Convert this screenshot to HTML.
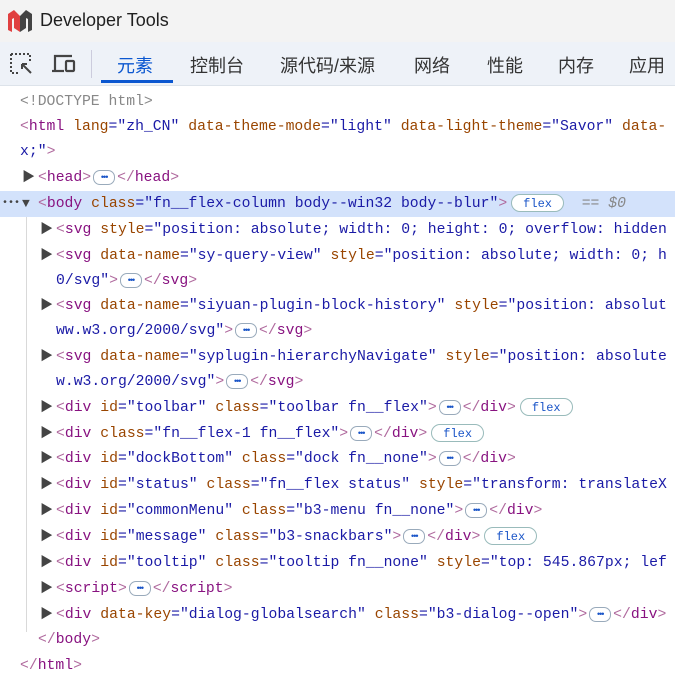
<!DOCTYPE html>
<html><head><meta charset="utf-8"><style>
body{margin:0;width:675px;height:682px;overflow:hidden;background:#fff;font-family:"Liberation Sans","Noto Sans CJK SC",sans-serif;position:relative}
.title{position:absolute;left:0;top:0;width:675px;height:42px;background:#f3f3f3}
.title span{position:absolute;left:40px;top:10px;font-size:18px;color:#1f1f1f}
.tabs{position:absolute;left:0;top:42px;width:675px;height:43px;background:#eef2f8;border-bottom:1px solid #dde3ea}
.tab{position:absolute;top:10px;font-size:18px;color:#333}
.sel{color:#0b57d0}
.ul{position:absolute;left:101px;top:80px;width:72px;height:3px;background:#0b57d0}
.l{position:absolute;left:0;right:0;height:26px;line-height:26px;font-family:"Liberation Mono","Noto Sans CJK SC",monospace;font-size:14.75px;white-space:pre;color:#1a1aa6;overflow:hidden}
.i1{left:20px;padding-left:18px}.i2{left:38px;padding-left:18px}
.t{color:#881280}.b{color:#b06a9e}.a{color:#994500}.v{color:#1a1aa6}.g{color:#888}
.tri{color:#444;font-size:13px;position:absolute;left:2px}
.e{display:inline-block;width:20px;height:13px;border:1px solid #9ab;border-radius:7px;vertical-align:middle;font-size:9px;line-height:12px;text-align:center;color:#1a55c8;font-family:"Liberation Sans",sans-serif;letter-spacing:-1px;margin:0 2px}
.f{display:inline-block;height:18px;line-height:18px;padding:0 11px;border:1px solid #9bb;border-radius:10px;font-size:12px;color:#1a55c8;vertical-align:middle;margin-left:4px;background:#fff;box-sizing:border-box}
.hl{background:#d3e2fb}
.guide{position:absolute;left:26px;top:216px;width:1px;height:416px;background:#d9d9d9}
</style></head><body>
<div class="title">
<svg style="position:absolute;left:8px;top:10px" width="24" height="22" viewBox="0 0 24 22"><path d="M0 4L6 0L12 6V22L6 18V8L4 9V22L0 20Z" fill="#e04040"/><path d="M12 6L18 0L24 4V20L20 22V9L18 8V18L12 22Z" fill="#444"/></svg>
<span>Developer Tools</span></div>
<div class="tabs">
<svg style="position:absolute;left:10px;top:11px" width="24" height="22" viewBox="0 0 24 22" fill="none" stroke="#444" stroke-width="2" stroke-dasharray="2 2"><path d="M1 1H20V8M1 1V20H8"/><path d="M12 11L21 20M12 11H17M12 11V16" stroke-dasharray="none"/></svg>
<svg style="position:absolute;left:52px;top:12px" width="24" height="20" viewBox="0 0 24 20" fill="none" stroke="#444" stroke-width="2.2"><path d="M3 16V2H20"/><path d="M0 17H12"/><rect x="14" y="7" width="8" height="10" rx="1"/></svg>
<div style="position:absolute;left:91px;top:8px;width:1px;height:28px;background:#ccd"></div>
<span class="tab sel" style="left:117px">元素</span>
<span class="tab" style="left:190px">控制台</span>
<span class="tab" style="left:280px">源代码/来源</span>
<span class="tab" style="left:414px">网络</span>
<span class="tab" style="left:487px">性能</span>
<span class="tab" style="left:558px">内存</span>
<span class="tab" style="left:629px">应用</span>
</div>
<div class="ul"></div>
<div class="guide"></div>
<div class="l g" style="top:89px;left:20px">&lt;!DOCTYPE html&gt;</div>
<div class="l" style="top:114px;left:20px"><span class="b">&lt;</span><span class="t">html</span> <span class="a">lang</span>=<span class="v">"zh_CN"</span> <span class="a">data-theme-mode</span>=<span class="v">"light"</span> <span class="a">data-light-theme</span>=<span class="v">"Savor"</span> <span class="a">data-</span></div>
<div class="l" style="top:139px;left:20px">x;"<span class="b">&gt;</span></div>
<div class="l i1" style="top:165px"><span class="tri">▶</span><span class="b">&lt;</span><span class="t">head</span><span class="b">&gt;</span><span class="e">•••</span><span class="b">&lt;/</span><span class="t">head</span><span class="b">&gt;</span></div>
<div class="l hl" style="top:191px;left:0;padding-left:38px"><span style="position:absolute;left:2px;color:#444;font-size:10px">•••</span><span class="tri" style="left:22px">▼</span><span class="b">&lt;</span><span class="t">body</span> <span class="a">class</span>=<span class="v">"fn__flex-column body--win32 body--blur"</span><span class="b">&gt;</span><span class="f">flex</span> <span class="g" style="font-style:italic"> == $0</span></div>
<div class="l i2" style="top:217px"><span class="tri">▶</span><span class="b">&lt;</span><span class="t">svg</span> <span class="a">style</span>=<span class="v">"position: absolute; width: 0; height: 0; overflow: hidden</span></div>
<div class="l i2" style="top:243px"><span class="tri">▶</span><span class="b">&lt;</span><span class="t">svg</span> <span class="a">data-name</span>=<span class="v">"sy-query-view"</span> <span class="a">style</span>=<span class="v">"position: absolute; width: 0; h</span></div>
<div class="l" style="top:268px;left:56px">0/svg"<span class="b">&gt;</span><span class="e">•••</span><span class="b">&lt;/</span><span class="t">svg</span><span class="b">&gt;</span></div>
<div class="l i2" style="top:293px"><span class="tri">▶</span><span class="b">&lt;</span><span class="t">svg</span> <span class="a">data-name</span>=<span class="v">"siyuan-plugin-block-history"</span> <span class="a">style</span>=<span class="v">"position: absolut</span></div>
<div class="l" style="top:318px;left:56px">ww.w3.org/2000/svg"<span class="b">&gt;</span><span class="e">•••</span><span class="b">&lt;/</span><span class="t">svg</span><span class="b">&gt;</span></div>
<div class="l i2" style="top:344px"><span class="tri">▶</span><span class="b">&lt;</span><span class="t">svg</span> <span class="a">data-name</span>=<span class="v">"syplugin-hierarchyNavigate"</span> <span class="a">style</span>=<span class="v">"position: absolute</span></div>
<div class="l" style="top:369px;left:56px">w.w3.org/2000/svg"<span class="b">&gt;</span><span class="e">•••</span><span class="b">&lt;/</span><span class="t">svg</span><span class="b">&gt;</span></div>
<div class="l i2" style="top:395px"><span class="tri">▶</span><span class="b">&lt;</span><span class="t">div</span> <span class="a">id</span>=<span class="v">"toolbar"</span> <span class="a">class</span>=<span class="v">"toolbar fn__flex"</span><span class="b">&gt;</span><span class="e">•••</span><span class="b">&lt;/</span><span class="t">div</span><span class="b">&gt;</span><span class="f">flex</span></div>
<div class="l i2" style="top:421px"><span class="tri">▶</span><span class="b">&lt;</span><span class="t">div</span> <span class="a">class</span>=<span class="v">"fn__flex-1 fn__flex"</span><span class="b">&gt;</span><span class="e">•••</span><span class="b">&lt;/</span><span class="t">div</span><span class="b">&gt;</span><span class="f">flex</span></div>
<div class="l i2" style="top:446px"><span class="tri">▶</span><span class="b">&lt;</span><span class="t">div</span> <span class="a">id</span>=<span class="v">"dockBottom"</span> <span class="a">class</span>=<span class="v">"dock fn__none"</span><span class="b">&gt;</span><span class="e">•••</span><span class="b">&lt;/</span><span class="t">div</span><span class="b">&gt;</span></div>
<div class="l i2" style="top:472px"><span class="tri">▶</span><span class="b">&lt;</span><span class="t">div</span> <span class="a">id</span>=<span class="v">"status"</span> <span class="a">class</span>=<span class="v">"fn__flex status"</span> <span class="a">style</span>=<span class="v">"transform: translateX</span></div>
<div class="l i2" style="top:498px"><span class="tri">▶</span><span class="b">&lt;</span><span class="t">div</span> <span class="a">id</span>=<span class="v">"commonMenu"</span> <span class="a">class</span>=<span class="v">"b3-menu fn__none"</span><span class="b">&gt;</span><span class="e">•••</span><span class="b">&lt;/</span><span class="t">div</span><span class="b">&gt;</span></div>
<div class="l i2" style="top:524px"><span class="tri">▶</span><span class="b">&lt;</span><span class="t">div</span> <span class="a">id</span>=<span class="v">"message"</span> <span class="a">class</span>=<span class="v">"b3-snackbars"</span><span class="b">&gt;</span><span class="e">•••</span><span class="b">&lt;/</span><span class="t">div</span><span class="b">&gt;</span><span class="f">flex</span></div>
<div class="l i2" style="top:550px"><span class="tri">▶</span><span class="b">&lt;</span><span class="t">div</span> <span class="a">id</span>=<span class="v">"tooltip"</span> <span class="a">class</span>=<span class="v">"tooltip fn__none"</span> <span class="a">style</span>=<span class="v">"top: 545.867px; lef</span></div>
<div class="l i2" style="top:576px"><span class="tri">▶</span><span class="b">&lt;</span><span class="t">script</span><span class="b">&gt;</span><span class="e">•••</span><span class="b">&lt;/</span><span class="t">script</span><span class="b">&gt;</span></div>
<div class="l i2" style="top:602px"><span class="tri">▶</span><span class="b">&lt;</span><span class="t">div</span> <span class="a">data-key</span>=<span class="v">"dialog-globalsearch"</span> <span class="a">class</span>=<span class="v">"b3-dialog--open"</span><span class="b">&gt;</span><span class="e">•••</span><span class="b">&lt;/</span><span class="t">div</span><span class="b">&gt;</span></div>
<div class="l" style="top:627px;left:38px"><span class="b">&lt;/</span><span class="t">body</span><span class="b">&gt;</span></div>
<div class="l" style="top:653px;left:20px"><span class="b">&lt;/</span><span class="t">html</span><span class="b">&gt;</span></div>
</body></html>
